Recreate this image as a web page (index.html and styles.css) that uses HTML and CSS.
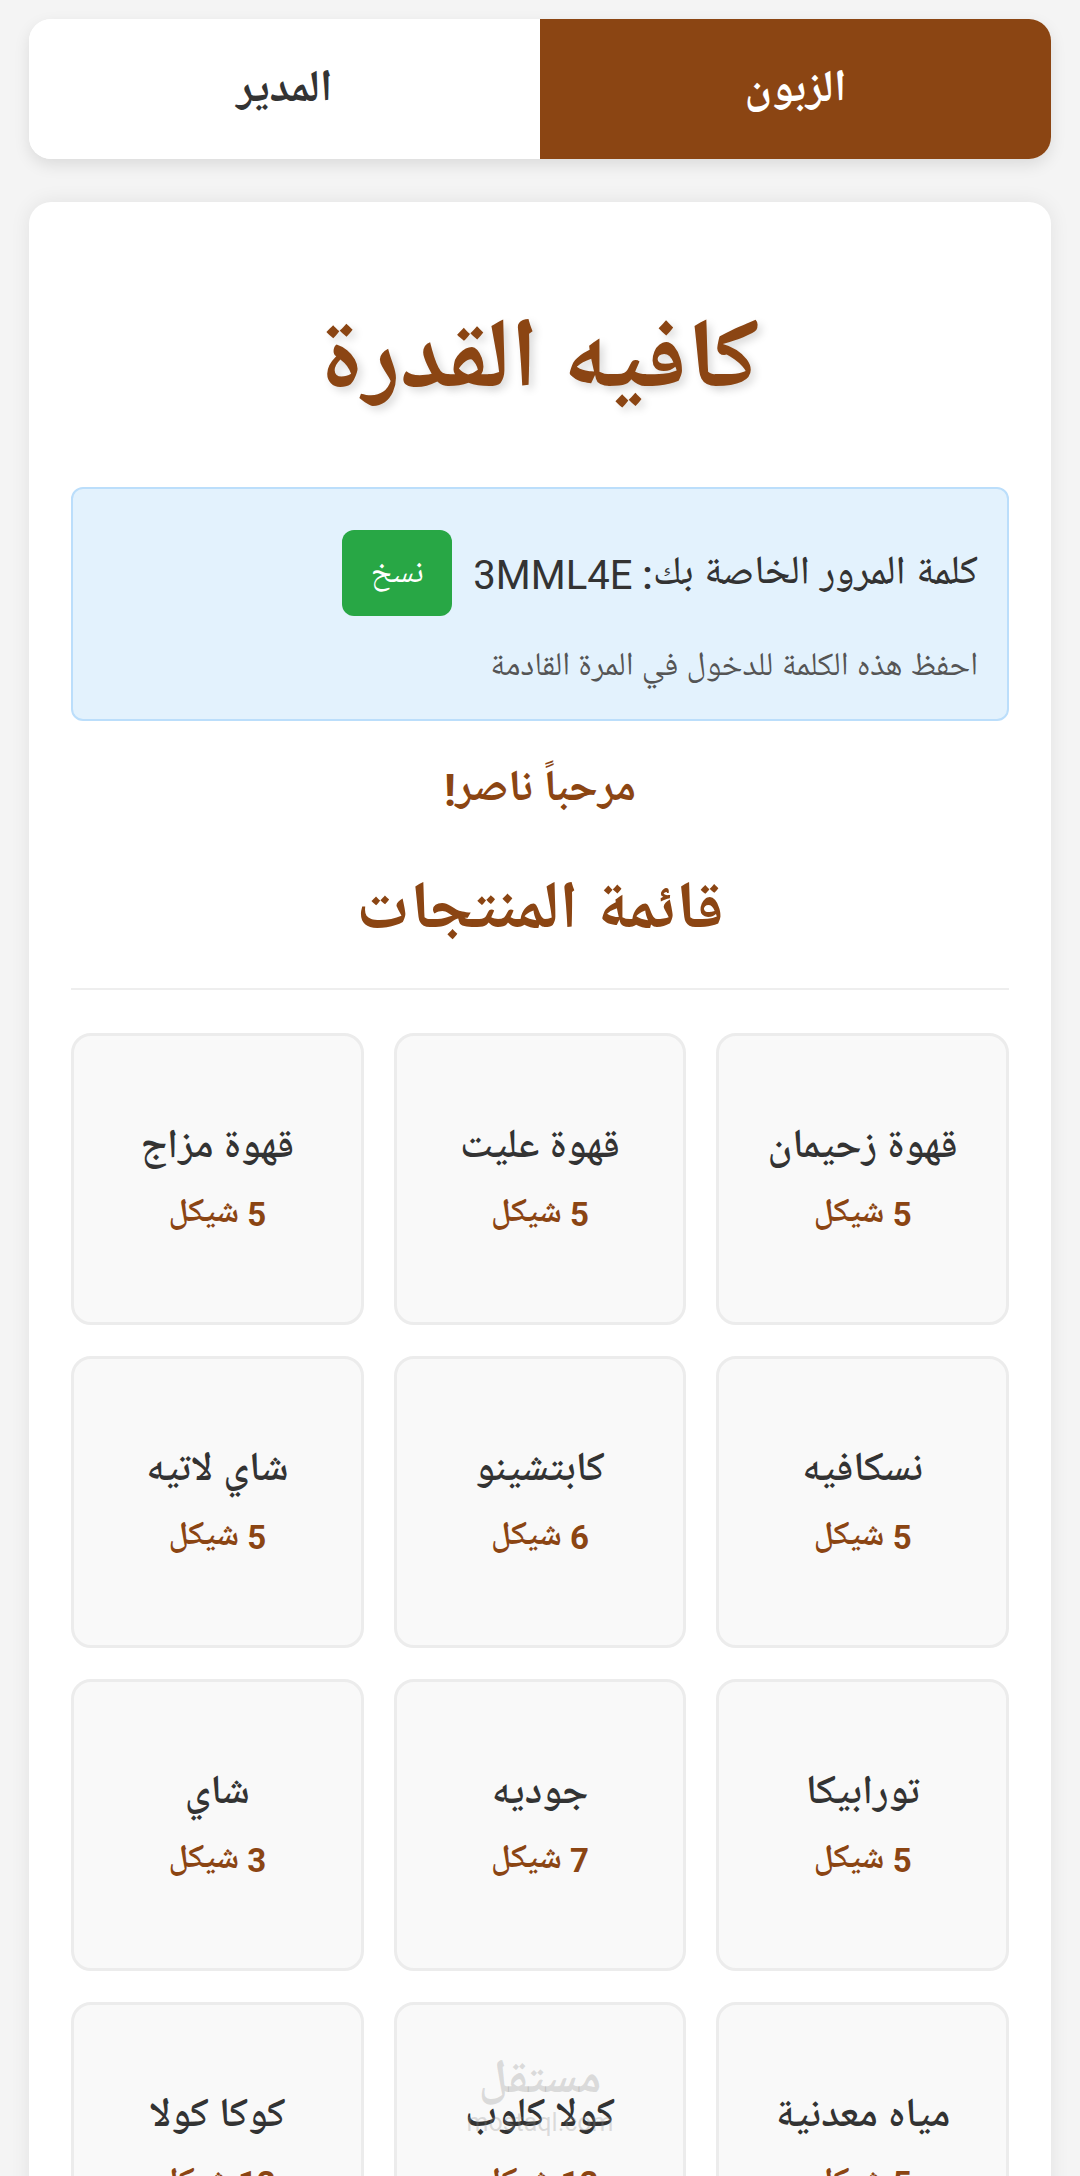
FILE: index.html
```html
<!DOCTYPE html>
<html lang="ar" dir="rtl">
<head>
  <meta charset="UTF-8">
  <meta name="viewport" content="width=device-width, initial-scale=1.0">
  <title>كافيه القدرة</title>
  <link rel="stylesheet" href="styles.css">
</head>
<body>

  <nav class="role-tabs">
    <button type="button" class="role-tab active">الزبون</button>
    <button type="button" class="role-tab">المدير</button>
  </nav>

  <main class="cafe-card">
    <h1 class="cafe-title">كافيه القدرة</h1>

    <div class="password-box">
      <div class="password-row">
        <span class="password-text">كلمة المرور الخاصة بك: <span class="code">3MML4E</span></span>
        <button type="button" class="copy-btn">نسخ</button>
      </div>
      <p class="password-hint">احفظ هذه الكلمة للدخول في المرة القادمة</p>
    </div>

    <h2 class="welcome">مرحباً ناصر!</h2>
    <h2 class="menu-title">قائمة المنتجات</h2>
    <hr>

    <div class="product-grid">
      <div class="product"><span class="product-name">قهوة زحيمان</span><span class="product-price">5 شيكل</span></div>
      <div class="product"><span class="product-name">قهوة عليت</span><span class="product-price">5 شيكل</span></div>
      <div class="product"><span class="product-name">قهوة مزاج</span><span class="product-price">5 شيكل</span></div>
      <div class="product"><span class="product-name">نسكافيه</span><span class="product-price">5 شيكل</span></div>
      <div class="product"><span class="product-name">كابتشينو</span><span class="product-price">6 شيكل</span></div>
      <div class="product"><span class="product-name">شاي لاتيه</span><span class="product-price">5 شيكل</span></div>
      <div class="product"><span class="product-name">تورابيكا</span><span class="product-price">5 شيكل</span></div>
      <div class="product"><span class="product-name">جوديه</span><span class="product-price">7 شيكل</span></div>
      <div class="product"><span class="product-name">شاي</span><span class="product-price">3 شيكل</span></div>
      <div class="product"><span class="product-name">مياه معدنية</span><span class="product-price">5 شيكل</span></div>
      <div class="product"><span class="product-name">كولا كلوب</span><span class="product-price">12 شيكل</span></div>
      <div class="product"><span class="product-name">كوكا كولا</span><span class="product-price">12 شيكل</span></div>
    </div>
  </main>

  <div class="watermark">
    <span class="wm-ar">مستقل</span>
    <span class="wm-en">mostaql.com</span>
  </div>

</body>
</html>
```

FILE: styles.css
```css
/* Global */
body {
    font-family: Roboto, "Noto Naskh Arabic UI", "Noto Naskh Arabic", "Droid Arabic Naskh", "DejaVu Sans", sans-serif;
    margin: 0;
    padding: 19px 29px 40px;
    background-color: #f4f4f4;
    color: #333;
    position: relative;
}

/* Role switch */
.role-tabs {
    display: flex;
    height: 140px;
    background-color: #ffffff;
    border-radius: 22px;
    overflow: hidden;
    box-shadow: 0 6px 16px rgba(0, 0, 0, 0.1);
    margin-bottom: 43px;
}

.role-tab {
    flex: 1;
    border: none;
    background: #ffffff;
    color: #333;
    font-family: inherit;
    font-size: 45px;
    font-weight: bold;
    cursor: pointer;
}

.role-tab.active {
    background-color: #8B4513;
    color: #ffffff;
}

/* Main card */
.cafe-card {
    background-color: #ffffff;
    border-radius: 22px;
    padding: 42px 42px 60px;
    box-shadow: 0 0 20px rgba(0, 0, 0, 0.08);
}

.cafe-title {
    margin: 63px 0 62px;
    text-align: center;
    font-size: 99px;
    line-height: 118px;
    color: #8B4513;
    text-shadow: 4px 4px 8px rgba(0, 0, 0, 0.15);
}

.password-box {
    background-color: #e3f2fd;
    border: 2px solid #bbdefb;
    border-radius: 12px;
    padding: 41px 29px 28px;
}

.password-row {
    display: flex;
    align-items: center;
    gap: 21px;
}

.password-text {
    font-size: 40px;
    font-weight: 500;
    color: #333;
}

.code {
    font-weight: normal;
}

.copy-btn {
    width: 110px;
    height: 86px;
    border: none;
    border-radius: 12px;
    background-color: #28a745;
    color: #ffffff;
    font-family: inherit;
    font-size: 33px;
    cursor: pointer;
}

.password-hint {
    margin: 29px 0 0;
    font-size: 33px;
    line-height: 46px;
    color: #555;
}

.welcome {
    margin: 42px 0 0;
    text-align: center;
    font-size: 44px;
    line-height: 56px;
    color: #8B4513;
}

.menu-title {
    margin: 55px 0 0;
    text-align: center;
    font-size: 67px;
    line-height: 80px;
    color: #8B4513;
}

hr {
    border: none;
    border-top: 2px solid #eeeeee;
    margin: 34px 0 43px;
}

/* Products */
.product-grid {
    display: grid;
    grid-template-columns: repeat(3, 1fr);
    gap: 31px 30px;
}

.product {
    height: 292px;
    box-sizing: border-box;
    display: flex;
    flex-direction: column;
    align-items: center;
    justify-content: center;
    gap: 19px;
    background-color: #f9f9f9;
    border: 3px solid #ececec;
    border-radius: 20px;
}

.product-name {
    font-size: 41px;
    line-height: 52px;
    font-weight: 600;
    color: #333;
}

.product-price {
    font-size: 33px;
    line-height: 42px;
    font-weight: bold;
    color: #8B4513;
}

/* Site watermark over the screenshot */
.watermark {
    position: absolute;
    top: 2056px;
    left: 460px;
    width: 160px;
    display: flex;
    flex-direction: column;
    align-items: center;
    color: rgba(140, 140, 140, 0.28);
    pointer-events: none;
}

.wm-ar {
    font-size: 48px;
    font-weight: bold;
    line-height: 54px;
}

.wm-en {
    font-size: 25px;
    line-height: 26px;
}
```
